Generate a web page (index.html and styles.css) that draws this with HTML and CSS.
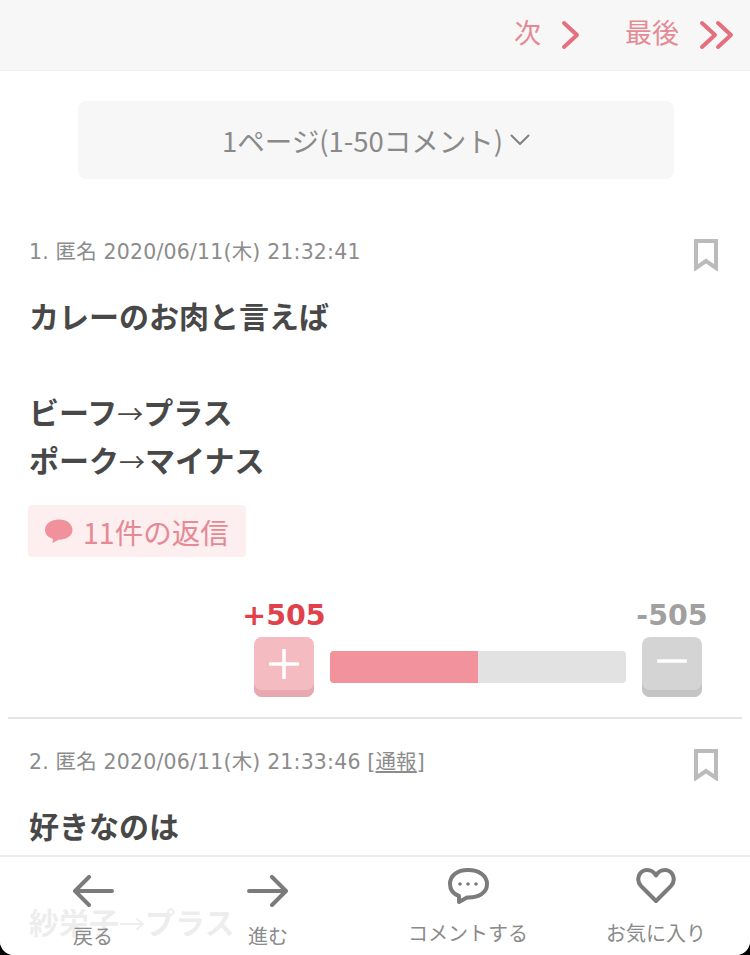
FILE: index.html
```html
<!DOCTYPE html>
<html lang="ja">
<head>
<meta charset="utf-8">
<title>コメント</title>
<link rel="stylesheet" href="styles.css">
</head>
<body>
<div class="screen">
  <header class="pager">
    <a class="pager-link"><span>次</span><svg class="chev" viewBox="0 0 20 30" width="20" height="30"><path d="M3 3l13 12L3 27" /></svg></a>
    <a class="pager-link"><span>最後</span><svg class="chev" viewBox="0 0 36 30" width="36" height="30"><path d="M3 3l13 12L3 27M19 3l13 12-13 12" /></svg></a>
  </header>
  <div class="select">1ページ(1-50コメント)<svg class="select-arrow" viewBox="0 0 20 12" width="20" height="12"><path d="M1.500 1.500l8.500 8.500 8.500-8.500"/></svg></div>

  <article class="comment first">
    <div class="meta">
      <span>1. 匿名 2020/06/11(木) 21:32:41</span>
      <svg class="bookmark" viewBox="0 0 24 32" width="24" height="32"><path d="M2 2h20v27l-10-7-10 7z"/></svg>
    </div>
    <p class="body">カレーのお肉と言えば<br><br>ビーフ<span class="arrow">→</span>プラス<br>ポーク<span class="arrow">→</span>マイナス</p>
    <div class="reply"><svg viewBox="0 0 30 26" width="30" height="26"><path d="M15 1.500C7 1.500 1 6 1 12c0 4.500 3.500 7.500 8 9l-.5 4 6-3.200c8 0 14-4 14-9.800S23 1.500 15 1.500z"/></svg>11件の返信</div>
    <div class="votes">
      <div class="vote">
        <span class="count plus">+505</span>
        <button class="btn btn-plus"><svg viewBox="0 0 30 30" width="30" height="30"><path d="M15 1v28M1 15h28"/></svg></button>
      </div>
      <div class="bar"><div class="bar-fill" style="width:50%"></div></div>
      <div class="vote">
        <span class="count minus">-505</span>
        <button class="btn btn-minus"><svg viewBox="0 0 30 30" width="30" height="30"><path d="M1 12h28"/></svg></button>
      </div>
    </div>
  </article>

  <article class="comment">
    <div class="meta">
      <span>2. 匿名 2020/06/11(木) 21:33:46 [<u>通報</u>]</span>
      <svg class="bookmark" viewBox="0 0 24 32" width="24" height="32"><path d="M2 2h20v27l-10-7-10 7z"/></svg>
    </div>
    <p class="body">好きなのは<br><br>紗栄子<span class="arrow">→</span>プラス</p>
  </article>

  <nav class="tabs">
    <a class="tab tab-back"><svg viewBox="0 0 42 32" width="42" height="32"><path d="M40 16H3M17 2L3 16l14 14"/></svg><span>戻る</span></a>
    <a class="tab tab-forward"><svg viewBox="0 0 42 32" width="42" height="32"><path d="M2 16h37M25 2l14 14-14 14"/></svg><span>進む</span></a>
    <a class="tab tab-comment"><svg viewBox="0 0 42 38" width="42" height="38"><path d="M21 3C10 3 3 8.500 3 17c0 6 3.500 10 9 12l0 6 8-4.500c12 .5 20-5 20-13.500C40 8.500 32 3 21 3z"/><circle class="dot" cx="13" cy="17" r="1.800"/><circle class="dot" cx="21" cy="17" r="1.800"/><circle class="dot" cx="29" cy="17" r="1.800"/></svg><span>コメントする</span></a>
    <a class="tab tab-fav"><svg viewBox="0 0 40 38" width="40" height="38"><path d="M20 34L5 19C-1 12 4 3 11 3c4 0 7 2 9 5.500C22 5 25 3 29 3c7 0 12 9 6 16z"/></svg><span>お気に入り</span></a>
  </nav>
</div>
</body>
</html>
```
FILE: styles.css
```css
* { box-sizing: border-box; }
html, body { margin: 0; height: 100%; background: #000; }
body {
  font-family: "Noto Sans CJK JP", sans-serif;
  color: #444;
}
.screen {
  position: relative;
  width: 750px;
  height: 955px;
  overflow: hidden;
  background: #fff;
  border-radius: 0 0 14px 14px;
}
.pager {
  height: 71px;
  padding: 0 15px 1px 0;
  background: #f7f7f7;
  border-bottom: 1px solid #f0f0f0;
  display: flex;
  justify-content: flex-end;
  align-items: center;
  gap: 44px;
}
.pager-link {
  display: flex;
  align-items: center;
  gap: 20px;
  font-size: 27px;
  color: #e58a95;
}
.pager-link span { margin-bottom: 7px; }
.chev { fill: none; stroke: #e56f7c; stroke-width: 4; stroke-linecap: round; stroke-linejoin: round; }
.select {
  width: 596px;
  height: 78px;
  margin: 30px 0 0 78px;
  background: #f7f7f7;
  border-radius: 8px;
  display: flex;
  align-items: center;
  justify-content: center;
  gap: 7px;
  font-size: 27.500px;
  color: #8a8a8a;
}
.select-arrow { fill: none; stroke: #808080; stroke-width: 2; stroke-linecap: round; stroke-linejoin: round; }
.comment { padding: 0 8px; }
.first { padding-top: 58px; }
.comment:not(.first) { padding-top: 28px; }
.meta {
  display: flex;
  justify-content: space-between;
  align-items: flex-start;
  height: 36px;
  padding: 0 24px 0 21px;
  font-family: "DejaVu Sans", "Noto Sans CJK JP", sans-serif;
  font-size: 20.500px;
  line-height: 30px;
  letter-spacing: 0.170px;
  color: #8c8c8c;
}
.bookmark { margin-top: 2px; fill: none; stroke: #bbb; stroke-width: 4; }
.body {
  margin: 18px 0 0;
  padding-left: 21px;
  font-size: 30px;
  font-weight: 700;
  line-height: 48px;
  color: #484848;
}
.arrow { font-size: 26px; font-weight: 400; line-height: 1; }
.reply {
  display: inline-flex;
  align-items: center;
  gap: 9px;
  width: 218px;
  height: 52px;
  margin: 22px 0 0 20px;
  padding-left: 16px;
  background: #fdeef0;
  border-radius: 4px;
  font-size: 28.500px;
  color: #e58a95;
}
.reply svg { fill: #f0919b; }
.votes {
  display: flex;
  align-items: flex-end;
  justify-content: flex-end;
  gap: 16px;
  height: 162px;
  padding: 0 40px 20px 0;
  border-bottom: 2px solid #e4e4e4;
}
.vote {
  position: relative;
  width: 60px;
  height: 60px;
}
.count {
  position: absolute;
  left: 50%;
  bottom: 61px;
  transform: translateX(-50%);
  font-family: "DejaVu Sans", sans-serif;
  font-weight: 700;
  font-size: 28.500px;
  line-height: 40px;
  white-space: nowrap;
}
.plus { color: #e0414b; }
.minus { color: #a0a0a0; }
.btn {
  display: flex;
  align-items: center;
  justify-content: center;
  width: 60px;
  height: 60px;
  padding: 0 0 6px;
  border: 0;
  border-radius: 8px;
}
.btn svg { fill: none; stroke: #fff; stroke-width: 3.500; stroke-linecap: round; }
.btn-plus { background: #f4bcc1; box-shadow: inset 0 -7px 0 #e5a9af; }
.btn-minus { background: #d4d4d4; box-shadow: inset 0 -7px 0 #c4c4c4; }
.bar {
  width: 296px;
  height: 32px;
  margin-bottom: 14px;
  background: #e2e2e2;
  border-radius: 4px;
  overflow: hidden;
}
.bar-fill { height: 100%; background: #f1929c; }
.tabs {
  position: absolute;
  left: 0;
  right: 0;
  bottom: 0;
  height: 100px;
  display: grid;
  grid-template-columns: 186px 164px 236px 140px 24px;
  background: rgba(255, 255, 255, 0.9);
  border-top: 2px solid #ececec;
}
.tab {
  display: flex;
  flex-direction: column;
  align-items: center;
  font-size: 20px;
  line-height: 26px;
  color: #8a8a8a;
}
.tab svg { fill: none; stroke: #7b7b7b; stroke-width: 4; stroke-linecap: round; stroke-linejoin: round; }
.tab .dot { fill: #7b7b7b; stroke: none; }
.tab-back, .tab-forward { padding-top: 18px; }
.tab-back span, .tab-forward span { margin-top: 16px; }
.tab-comment, .tab-fav { padding-top: 10px; }
.tab-comment span, .tab-fav span { margin-top: 15px; }
```
